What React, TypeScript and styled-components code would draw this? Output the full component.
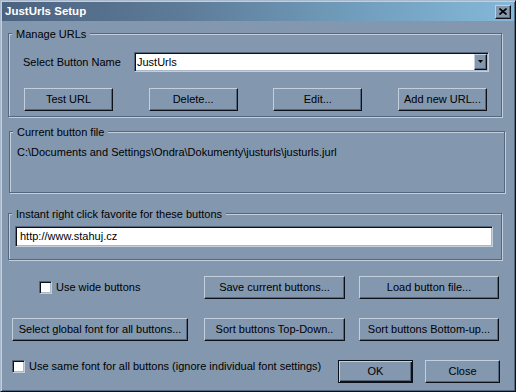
import React from "react";
import styled, { createGlobalStyle } from "styled-components";

const FACE = "#8397af";
const LIGHT = "#c3cfdc";
const SHADOW = "#56667c";
const DARK = "#0c1018";

const Global = createGlobalStyle`
  html, body { margin: 0; padding: 0; background: ${FACE}; }
  body {
    font-family: "Liberation Sans", Arial, sans-serif;
    font-size: 11px;
    color: #000;
  }
`;

const Window = styled.div`
  box-sizing: border-box;
  width: 516px;
  height: 392px;
  background: ${FACE};
  border-style: solid;
  border-width: 1px;
  border-color: #a9b8ca ${DARK} ${DARK} #a9b8ca;
  box-shadow: inset 1px 1px 0 ${LIGHT}, inset -1px -1px 0 ${SHADOW};
  padding: 1px;
  display: flex;
  flex-direction: column;
`;

const TitleBar = styled.div`
  height: 19px;
  flex: none;
  display: flex;
  align-items: center;
  justify-content: space-between;
  padding: 0 3px 0 3px;
  background: linear-gradient(90deg, #4c6380 0%, #5d7b98 35%, #6e9ab8 65%, #84b8d8 100%);
`;

const TitleText = styled.span`
  color: #fff;
  font-weight: bold;
  font-size: 11.5px;
  line-height: 13px;
`;

const CloseButton = styled.div`
  box-sizing: border-box;
  width: 16px;
  height: 14px;
  background: ${FACE};
  border: 1px solid;
  border-color: ${LIGHT} ${DARK} ${DARK} ${LIGHT};
  box-shadow: inset -1px -1px 0 ${SHADOW};
  display: flex;
  align-items: center;
  justify-content: center;
  padding: 0 1px 1px 0;
`;

const Body = styled.div`
  display: flex;
  flex-direction: column;
  padding: 12px 0 0 6px;
`;

const Group = styled.div<{ $w: number; $h: number; $ml?: number; $mt?: number }>`
  position: relative;
  box-sizing: border-box;
  width: ${(p) => p.$w}px;
  height: ${(p) => p.$h}px;
  margin-left: ${(p) => p.$ml ?? 0}px;
  margin-top: ${(p) => p.$mt ?? 0}px;
  border: 1px solid ${SHADOW};
  box-shadow: inset 1px 1px 0 ${LIGHT}, 1px 1px 0 ${LIGHT};
  display: flex;
  flex-direction: column;
`;

const Legend = styled.span`
  position: absolute;
  top: -6px;
  left: 3px;
  padding: 0 4px;
  background: ${FACE};
  line-height: 13px;
  white-space: nowrap;
`;

const ManageContent = styled.div`
  display: flex;
  flex-direction: column;
  padding: 18px 12px 0 14px;
`;

const ComboRow = styled.div`
  display: flex;
  align-items: center;
  height: 20px;
`;

const FieldLabel = styled.span`
  line-height: 13px;
`;

const Combo = styled.div`
  box-sizing: border-box;
  margin-left: auto;
  width: 355px;
  height: 20px;
  background: #fff;
  border: 1px solid;
  border-color: ${SHADOW} ${LIGHT} ${LIGHT} ${SHADOW};
  box-shadow: inset 1px 1px 0 ${DARK}, inset -1px -1px 0 #a9b7c7;
  padding: 1px;
  display: flex;
`;

const ComboText = styled.span`
  flex: 1;
  line-height: 16px;
  padding-left: 1px;
`;

const ArrowButton = styled.div`
  box-sizing: border-box;
  width: 13px;
  height: 16px;
  background: ${FACE};
  border: 1px solid;
  border-color: ${LIGHT} ${DARK} ${DARK} ${LIGHT};
  box-shadow: inset -1px -1px 0 ${SHADOW};
  display: flex;
  align-items: center;
  justify-content: center;
  padding: 0 1px 1px 0;
`;

const ButtonRow = styled.div`
  display: flex;
  justify-content: space-between;
  margin-top: 16px;
  padding: 0 2px 0 1px;
`;

const Button = styled.button<{ $w: number; $default?: boolean }>`
  box-sizing: border-box;
  width: ${(p) => p.$w}px;
  height: 23px;
  margin: 0;
  padding: 0;
  background: ${FACE};
  font-family: "Liberation Sans", Arial, sans-serif;
  font-size: 11px;
  color: #000;
  line-height: 13px;
  white-space: nowrap;
  border: 1px solid;
  ${(p) =>
    p.$default
      ? `border-color: ${DARK};
         box-shadow: inset 1px 1px 0 ${LIGHT}, inset -1px -1px 0 ${DARK}, inset -2px -2px 0 ${SHADOW};`
      : `border-color: ${LIGHT} ${DARK} ${DARK} ${LIGHT};
         box-shadow: inset -1px -1px 0 ${SHADOW};`}
`;

const FileContent = styled.div`
  padding: 14px 0 0 7px;
  line-height: 13px;
`;

const FavContent = styled.div`
  padding: 12px 0 0 6px;
`;

const TextInput = styled.div`
  box-sizing: border-box;
  width: 478px;
  height: 21px;
  background: #fff;
  border: 1px solid;
  border-color: ${SHADOW} ${LIGHT} ${LIGHT} ${SHADOW};
  box-shadow: inset 1px 1px 0 ${DARK}, inset -1px -1px 0 #a9b7c7;
  padding: 0 0 0 4px;
  line-height: 19px;
`;

const ActionGrid = styled.div`
  display: grid;
  grid-template-columns: 192px 155px 140px;
  grid-auto-rows: 23px;
  row-gap: 19px;
  margin: 16px 0 0 4px;
`;

const CheckLabel = styled.label<{ $ml?: number; $self?: string }>`
  display: flex;
  align-items: center;
  gap: 4px;
  height: 13px;
  line-height: 13px;
  margin-left: ${(p) => p.$ml ?? 0}px;
  align-self: ${(p) => p.$self ?? "center"};
  white-space: nowrap;
`;

const CheckBox = styled.span`
  box-sizing: border-box;
  width: 13px;
  height: 13px;
  flex: none;
  background: #fff;
  border: 1px solid;
  border-color: ${SHADOW} ${LIGHT} ${LIGHT} ${SHADOW};
  box-shadow: inset 1px 1px 0 ${DARK}, inset -1px -1px 0 #a9b7c7;
`;

const BottomRow = styled.div`
  display: flex;
  height: 23px;
  margin: 19px 14px 0 4px;
`;

const OkButton = styled(Button)`
  margin-left: auto;
`;

const CloseBtn = styled(Button)`
  margin-left: 12px;
`;

export default function App() {
  return (
    <>
      <Global />
      <Window>
        <TitleBar>
          <TitleText>JustUrls Setup</TitleText>
          <CloseButton>
            <svg width="8" height="7" viewBox="0 0 8 7">
              <path d="M0.5 0.5 L7.5 6.5 M7.5 0.5 L0.5 6.5" stroke="#000" strokeWidth="1.6" fill="none" />
            </svg>
          </CloseButton>
        </TitleBar>
        <Body>
          <Group $w={494} $h={84}>
            <Legend>Manage URLs</Legend>
            <ManageContent>
              <ComboRow>
                <FieldLabel>Select Button Name</FieldLabel>
                <Combo>
                  <ComboText>JustUrls</ComboText>
                  <ArrowButton>
                    <svg width="5" height="3" viewBox="0 0 5 3">
                      <polygon points="0,0 5,0 2.5,3" fill="#000" />
                    </svg>
                  </ArrowButton>
                </Combo>
              </ComboRow>
              <ButtonRow>
                <Button $w={89}>Test URL</Button>
                <Button $w={89}>Delete...</Button>
                <Button $w={89}>Edit...</Button>
                <Button $w={89}>Add new URL...</Button>
              </ButtonRow>
            </ManageContent>
          </Group>

          <Group $w={496} $h={62} $ml={1} $mt={14}>
            <Legend>Current button file</Legend>
            <FileContent>C:\Documents and Settings\Ondra\Dokumenty\justurls\justurls.jurl</FileContent>
          </Group>

          <Group $w={494} $h={47} $mt={20}>
            <Legend>Instant right click favorite for these buttons</Legend>
            <FavContent>
              <TextInput>http://www.stahuj.cz</TextInput>
            </FavContent>
          </Group>

          <ActionGrid>
            <CheckLabel $ml={27}>
              <CheckBox />
              Use wide buttons
            </CheckLabel>
            <Button $w={141}>Save current buttons...</Button>
            <Button $w={140}>Load button file...</Button>
            <Button $w={176}>Select global font for all buttons...</Button>
            <Button $w={141}>Sort buttons Top-Down..</Button>
            <Button $w={140}>Sort buttons Bottom-up...</Button>
          </ActionGrid>

          <BottomRow>
            <CheckLabel $self="flex-start">
              <CheckBox />
              Use same font for all buttons (ignore individual font settings)
            </CheckLabel>
            <OkButton $w={75} $default>OK</OkButton>
            <CloseBtn $w={75}>Close</CloseBtn>
          </BottomRow>
        </Body>
      </Window>
    </>
  );
}
